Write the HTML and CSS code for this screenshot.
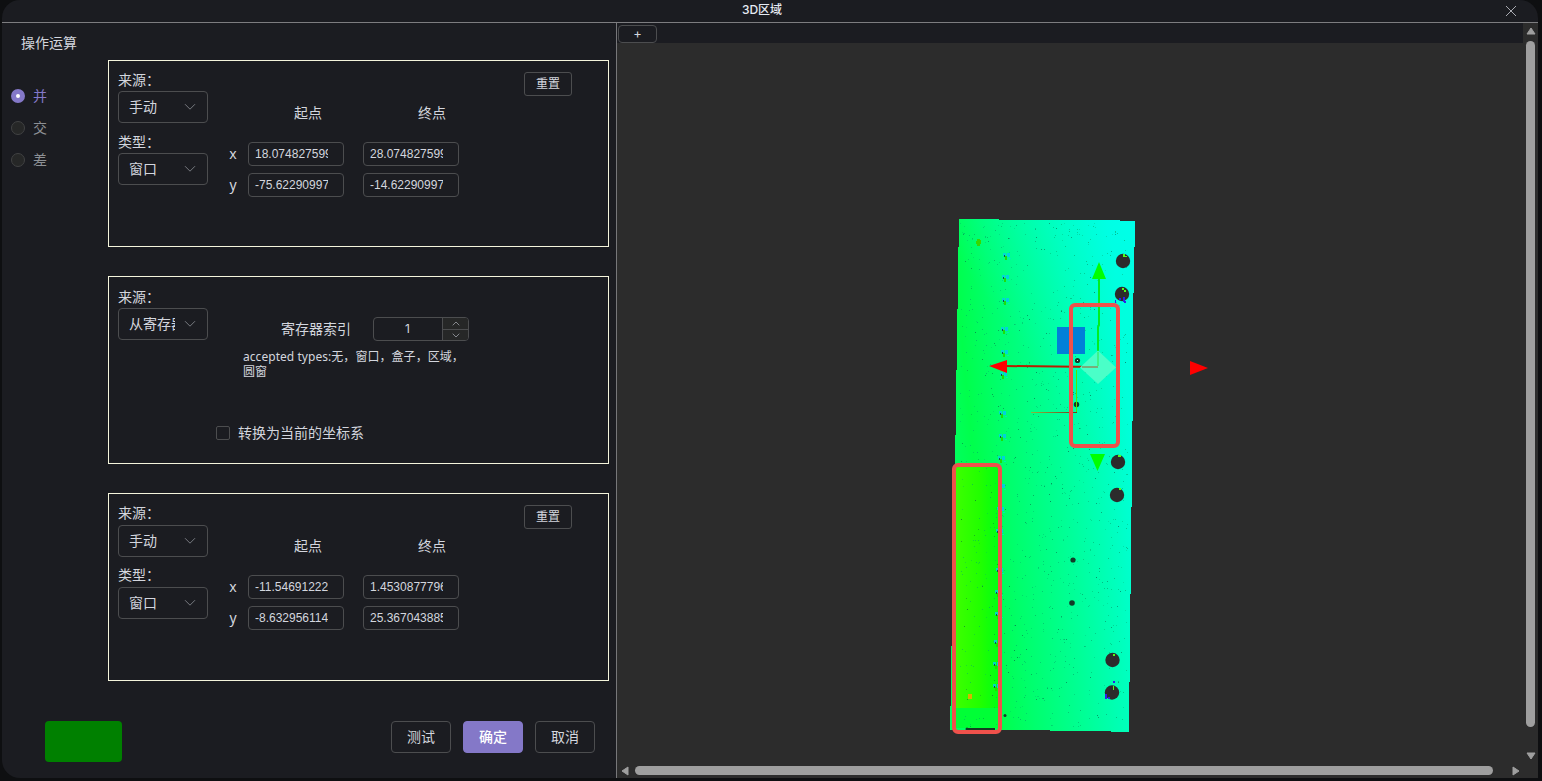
FILE: index.html
```html
<!DOCTYPE html>
<html lang="zh-CN">
<head>
<meta charset="utf-8">
<title>3D区域</title>
<link rel="stylesheet" href="styles.css">
</head>
<body>
<div class="dialog">
  <header class="titlebar">
    <span class="title">3D区域</span>
    <svg class="close" width="12" height="12" viewBox="0 0 12 12"><path d="M1 1 L11 11 M11 1 L1 11"/></svg>
  </header>
  <div class="content">
    <section class="settings">
      <h2 class="heading">操作运算</h2>
      <div class="main">
        <div class="radios">
          <label class="radio checked"><i></i>并</label>
          <label class="radio"><i></i>交</label>
          <label class="radio"><i></i>差</label>
        </div>
        <div class="cards">
          <div class="card first">
            <div class="selectors">
              <div class="label">来源：</div>
              <div class="select"><span>手动</span><svg class="chev" viewBox="0 0 12 8"><path d="M1 1.2 L6 6.2 L11 1.2"/></svg></div>
              <div class="label next">类型：</div>
              <div class="select"><span>窗口</span><svg class="chev" viewBox="0 0 12 8"><path d="M1 1.2 L6 6.2 L11 1.2"/></svg></div>
            </div>
            <div class="coords">
              <div class="points"><span>起点</span><span>终点</span></div>
              <div class="row"><b>x</b><div class="input"><span>18.074827599</span></div><div class="input"><span>28.074827599</span></div></div>
              <div class="row"><b>y</b><div class="input"><span>-75.62290997</span></div><div class="input"><span>-14.62290997</span></div></div>
            </div>
            <div class="reset">重置</div>
          </div>
          <div class="card">
            <div class="selectors">
              <div class="label">来源：</div>
              <div class="select"><span>从寄存器</span><svg class="chev" viewBox="0 0 12 8"><path d="M1 1.2 L6 6.2 L11 1.2"/></svg></div>
            </div>
            <div class="register">
              <div class="index"><span>寄存器索引</span>
                <div class="number"><span class="value">1</span>
                  <div class="steps">
                    <div class="step"><svg viewBox="0 0 8 5"><path d="M.7 4.3 L4 1 L7.3 4.3"/></svg></div>
                    <div class="step"><svg viewBox="0 0 8 5"><path d="M.7 .7 L4 4 L7.3 .7"/></svg></div>
                  </div>
                </div>
              </div>
              <div class="types">accepted types:无，窗口，盒子，区域，<br>圆窗</div>
              <label class="check"><i></i>转换为当前的坐标系</label>
            </div>
          </div>
          <div class="card last">
            <div class="selectors">
              <div class="label">来源：</div>
              <div class="select"><span>手动</span><svg class="chev" viewBox="0 0 12 8"><path d="M1 1.2 L6 6.2 L11 1.2"/></svg></div>
              <div class="label next">类型：</div>
              <div class="select"><span>窗口</span><svg class="chev" viewBox="0 0 12 8"><path d="M1 1.2 L6 6.2 L11 1.2"/></svg></div>
            </div>
            <div class="coords">
              <div class="points"><span>起点</span><span>终点</span></div>
              <div class="row"><b>x</b><div class="input"><span>-11.54691222</span></div><div class="input"><span>1.4530877796</span></div></div>
              <div class="row"><b>y</b><div class="input"><span>-8.632956114</span></div><div class="input"><span>25.367043885</span></div></div>
            </div>
            <div class="reset">重置</div>
          </div>
        </div>
      </div>
      <footer class="footer">
        <div class="status"></div>
        <div class="btn">测试</div>
        <div class="btn primary">确定</div>
        <div class="btn">取消</div>
      </footer>
    </section>
    <section class="viewer">
      <div class="stage">
        <div class="tabs"><div class="add">+</div></div>
        <svg class="scene" width="906" height="720" viewBox="617 43 906 720">
          <defs>
            <linearGradient id="plate" gradientUnits="userSpaceOnUse" x1="954" y1="480" x2="1134" y2="462">
              <stop offset="0" stop-color="#00ff60"/><stop offset=".12" stop-color="#00ff4c"/><stop offset=".3" stop-color="#00ff6c"/><stop offset=".6" stop-color="#00ff98"/><stop offset=".85" stop-color="#00ffc0"/><stop offset="1" stop-color="#00ffda"/>
            </linearGradient>
            <linearGradient id="top" gradientUnits="userSpaceOnUse" x1="1010" y1="330" x2="1145" y2="230">
              <stop offset="0" stop-color="#00ffd0" stop-opacity="0"/><stop offset="1" stop-color="#00fff0" stop-opacity=".75"/>
            </linearGradient>
            <linearGradient id="strip">
              <stop offset="0" stop-color="#3cff00"/><stop offset=".55" stop-color="#22ff00"/><stop offset="1" stop-color="#00ff14"/>
            </linearGradient>
            <linearGradient id="axis"><stop offset="0" stop-color="#8cb43c"/><stop offset="1" stop-color="#704020"/></linearGradient>
          </defs>
          <g shape-rendering="crispEdges">
            <path fill="url(#plate)" d="M959 219H999V220H1120V221H1135V247H1134V293H1133V421H1132V507H1131V594H1130V682H1129V732H1111V731H1050V730H950V706H951V646H952V520H955V435H956V370H957V309H958V247H959Z"/>
            <path fill="url(#top)" d="M959 219H999V220H1120V221H1135V247H1134V293H1133V421H1132V507H958V247H959Z"/>
            <rect x="956" y="467" width="43" height="241" fill="url(#strip)"/>
            <rect x="956" y="708" width="43" height="20" fill="#00ff36"/>
            <rect x="966" y="728" width="29" height="2" fill="#143c20"/>
            <g id="grain"></g>
            <rect x="1057" y="327" width="28" height="27" fill="#0080d8"/>
          </g>
          <g fill="#2c2c2c">
            <circle cx="1123" cy="261" r="7.2"/><circle cx="1122" cy="294" r="7.2"/><circle cx="1118" cy="462" r="7.2"/><circle cx="1117" cy="495" r="7.2"/><circle cx="1112.5" cy="660" r="7.2"/><circle cx="1112" cy="692.5" r="7.2"/>
          </g>
          <g fill="#123c28">
            <circle cx="1077.5" cy="360.5" r="2.6"/><circle cx="1076.5" cy="404.5" r="2.7"/><circle cx="1073" cy="560" r="2.6"/><circle cx="1072" cy="603" r="2.8"/><circle cx="1005" cy="715.5" r="1.5"/><circle cx="967" cy="729" r="1.5"/>
          </g>
          <g shape-rendering="crispEdges">
            <path fill="#50ff18" d="M1123 254h2v3h-2zM1124 256h3v1h-3zM1122 288h2v2h-2zM1124 290h2v2h-2zM1118 455h3v2h-3zM1119 488h2v2h-2zM1113 654h2v2h-2zM1113 686h1v4h-1z"/>
            <path fill="#3020e8" d="M1123 297h2v5h-2zM1119 298h2v2h-2zM1124 301h2v2h-2zM1115 300h1v3h-1zM1105 694h2v5h-2zM1108 697h2v2h-2zM1113 681h2v2h-2z"/>
            <rect x="1077" y="360" width="1" height="1" fill="#f2f4f0"/>
            <rect x="968" y="694" width="4" height="5" fill="#d8b400"/><path fill="#38d800" d="M977 239h3v1h1v4h-1v2h-3v-2h-1v-3h1z"/>
            <rect x="1076" y="370" width="1" height="42" fill="#54e600"/>
            <rect x="1031" y="412" width="46" height="1" fill="url(#axis)"/>
          </g>
          <path stroke="#00ef20" stroke-width="2" d="M1099 278V325L1098 327V366" fill="none"/>
          <path fill="#00ff00" d="M1099 262L1106 279H1092ZM1090 454H1105L1097.5 471Z"/>
          <path stroke="#b81e00" stroke-width="2" d="M1006 366L1098 367"/>
          <path fill="#ff0000" d="M989 366L1007 360V373ZM1190 361L1208 368L1190 375Z"/>
          <path fill="#4affc8" d="M1098 350.5L1116 367.5L1098 384L1080 367.5Z"/>
          <path stroke="#38f070" stroke-width="1.5" d="M1098 366V352" fill="none"/>
          <path stroke="#8a9060" stroke-width="1.5" d="M1082 367H1098" fill="none"/>
          <rect x="1071" y="305" width="47" height="141" rx="4" fill="none" stroke="#ef514b" stroke-width="4"/>
          <rect x="954" y="465" width="46" height="267" rx="4" fill="none" stroke="#ef514b" stroke-width="4"/>
        </svg>
      </div>
      <div class="vbar">
        <svg width="10" height="8" viewBox="0 0 10 8"><path d="M5 1L9 7H1Z"/></svg>
        <div class="thumb"></div>
        <svg width="10" height="8" viewBox="0 0 10 8"><path d="M5 7L9 1H1Z"/></svg>
      </div>
      <div class="hbar">
        <svg width="8" height="10" viewBox="0 0 8 10"><path d="M1 5L7 1V9Z"/></svg>
        <div class="thumb"></div>
        <svg width="8" height="10" viewBox="0 0 8 10"><path d="M7 5L1 1V9Z"/></svg>
      </div>
    </section>
  </div>
</div>
<script src="scene.js"></script>
</body>
</html>
```
FILE: scene.js
```js
// Fills the height map with scan noise from a fixed seed.
let seed = 71;
const rnd = () => (seed = (seed * 16807) % 2147483647) / 2147483647;
const grain = document.getElementById('grain');
function dot(x, y, w, h, fill, opacity) {
  const r = document.createElementNS('http://www.w3.org/2000/svg', 'rect');
  Object.entries({ x, y, width: w, height: h, fill, opacity }).forEach(([k, v]) => r.setAttribute(k, v));
  grain.appendChild(r);
}
for (let i = 0; i < 1000; i++) {
  const x = Math.floor(960 + rnd() * 168);
  const y = Math.floor(223 + rnd() * 504);
  dot(x, y, 1, 1, rnd() < 0.25 ? '#075c40' : '#00a868', 0.25 + rnd() * 0.4);
}
// Row of drilled marks along the left third of the plate.
[256, 278, 301, 330, 353, 375, 414, 437, 459, 487, 510, 532, 571, 593, 615, 643, 665, 687].forEach((y, i) => {
  const x = Math.round(1006 - i * 0.6);
  dot(x - 3, y - 3, 3, 3, '#00cfe8', 0.8);
  dot(x + 1, y - 3, 3, 4, '#00c4ff', 0.75);
  dot(x - 1, y, 2, 4, '#22d800', 0.9);
  dot(x - 2, y - 1, 1, 2, '#154040', 0.9);
  dot(x + 3, y + 2, 2, 1, '#00e8c0', 0.8);
});
```
FILE: styles.css
```css
* { box-sizing: border-box; }
body { margin: 0; width: 1542px; height: 781px; overflow: hidden; background: #0e0f11; color: #d3d6de; font: 14px/22px "Noto Sans", "Noto Sans CJK SC", sans-serif; }
.dialog { width: 1536px; height: 778px; margin-left: 2px; border-radius: 18px 18px 0 18px; overflow: hidden; background: #1b1c21; display: flex; flex-direction: column; }
.titlebar { height: 23px; flex: none; border-bottom: 1px solid #7d7d80; display: grid; grid-template-columns: 1fr auto 1fr; align-items: center; padding: 0 21px 2px 5px; font: 500 12px/18px "Inter", "Noto Sans CJK SC", sans-serif; color: #e5eaf3; }
.title { grid-column: 2; }
.close { justify-self: end; stroke: #a9abb2; fill: none; margin-top: 1px; }
.content { flex: 1; display: flex; min-height: 0; }
.settings { width: 615px; flex: none; border-right: 1px solid #77777a; display: flex; flex-direction: column; }
.heading { margin: 9px 0 6px 19px; font-size: 14px; line-height: 22px; font-weight: 400; }
.main { display: flex; }
.radios { width: 106px; padding: 20px 0 0 9px; }
.radio { display: flex; align-items: center; gap: 8px; height: 32px; color: #8d9095; }
.radio i { width: 14px; height: 14px; border-radius: 50%; border: 1px solid #414243; background: #262727; }
.radio.checked { color: #8478c8; }
.radio.checked i { border: 5px solid #8478c8; background: #fff; }
.cards { display: flex; flex-direction: column; gap: 29px; }
.card { width: 501px; height: 188px; border: 1px solid #f5f5dc; display: flex; align-items: flex-start; padding-left: 9px; }
.card.first { height: 187px; }
.selectors { width: 90px; padding-top: 9px; }
.first .selectors { padding-top: 8px; }
.label { height: 22px; white-space: nowrap; }
.last .label { line-height: 20px; }
.label.next { margin-top: 8px; }
.select { height: 32px; border: 1px solid #4c4d4f; border-radius: 4px; padding: 0 11px 0 10px; display: flex; align-items: center; justify-content: space-between; }
.select span { width: 46px; overflow: hidden; white-space: nowrap; }
.chev { width: 12px; height: 8px; fill: none; stroke: #777a80; stroke-width: 1; }
.coords { margin-left: 20px; width: 231px; }
.points { display: flex; gap: 96px; padding: 41px 0 18px 66px; }
.points span { width: 28px; white-space: nowrap; }
.row { display: grid; grid-template-columns: 20px 96px 96px; margin-bottom: 7px; height: 24px; align-items: center; }
.row b { width: 10px; font-weight: 400; text-align: center; }
.row { column-gap: 0; grid-template-columns: 20px 115px 96px; }
.input { width: 96px; height: 24px; border: 1px solid #4c4d4f; border-radius: 4px; padding: 0 15px 0 6px; font: 12px/22px "Liberation Sans", sans-serif; }
.input span { display: block; overflow: hidden; white-space: nowrap; }
.reset { margin: 11px 36px 0 auto; width: 48px; height: 24px; border: 1px solid #4c4d4f; border-radius: 3px; font-size: 12px; line-height: 22px; text-align: center; }
.register { margin-left: 8px; padding-top: 40px; }
.index { display: flex; align-items: center; gap: 22px; padding-left: 65px; height: 24px; white-space: nowrap; }
.number { width: 96px; height: 24px; border: 1px solid #4c4d4f; border-radius: 4px; display: flex; overflow: hidden; }
.value { flex: 1; padding-right: 1px; text-align: center; font: 12px/22px "Inter", sans-serif; }
.steps { width: 26px; border-left: 1px solid #4c4d4f; background: #262727; }
.step { height: 11px; display: flex; align-items: center; justify-content: center; }
.step + .step { border-top: 1px solid #4c4d4f; }
.step svg { width: 8px; height: 5px; fill: none; stroke: #909399; stroke-width: .9; }
.types { margin: 8px 0 0 27px; font-size: 12px; line-height: 15px; width: 235px; white-space: nowrap; letter-spacing: .05px; }
.check { display: flex; align-items: center; gap: 8px; margin-top: 43px; }
.check i { width: 14px; height: 14px; border: 1px solid #4c4d4f; border-radius: 2px; }
.footer { display: flex; align-items: flex-start; gap: 12px; padding: 40px 21px 0 43px; }
.status { width: 77px; height: 41px; border-radius: 4px; background: #008000; margin-right: auto; }
.btn { width: 60px; height: 32px; border: 1px solid #4c4d4f; border-radius: 4px; text-align: center; line-height: 30px; }
.btn.primary { background: #8478c8; border-color: #8478c8; color: #fff; font-weight: 500; }
.viewer { flex: 1; display: grid; grid-template-columns: 906px 15px; grid-template-rows: 740px 15px; background: #2c2c2c; }
.stage { display: flex; flex-direction: column; }
.tabs { height: 20px; background: #1b1c21; padding: 2px 0 0 1px; }
.add { width: 39px; height: 18px; border: 1px solid #4c4d4f; border-radius: 4px; text-align: center; font: 13px/14px "Inter", sans-serif; }
.scene { display: block; }
.vbar { display: flex; flex-direction: column; align-items: center; padding: 4px 0 3px; fill: #9f9f9f; stroke: #9f9f9f; stroke-linejoin: round; }
.vbar .thumb { width: 9px; height: 686px; margin: 6px 0 auto; border-radius: 5px; background: #9f9f9f; }
.hbar { display: flex; align-items: center; padding: 0 3px 0 4px; fill: #9f9f9f; stroke: #9f9f9f; stroke-linejoin: round; }
.hbar .thumb { width: 858px; height: 9px; margin: 0 auto 0 6px; border-radius: 5px; background: #9f9f9f; }
```
